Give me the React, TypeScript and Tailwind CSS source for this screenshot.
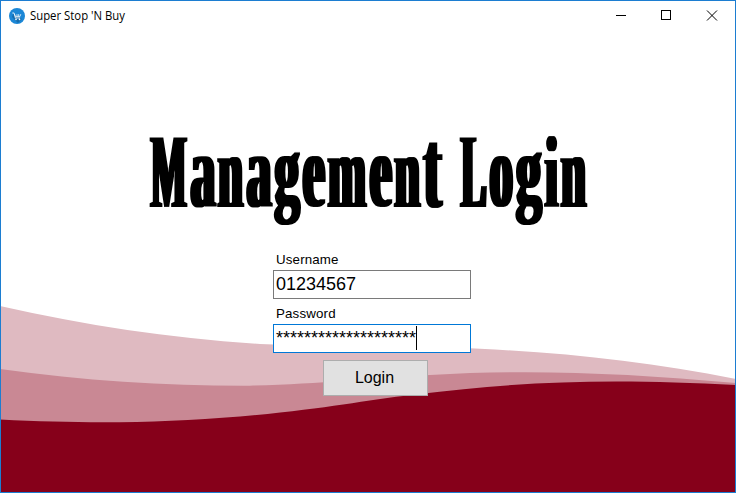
const letters: [string, number, number, number, number][] = [
  ["M", 151, 35.5, 106, 207], ["a", 190.5, 25, 106, 206], ["n", 218, 25, 106, 207], ["a", 246.5, 25, 106, 206], ["g", 274.5, 25, 99, 204],
  ["e", 302.5, 22.5, 106, 206], ["m", 328, 38, 106, 207], ["e", 369.5, 22.5, 106, 206], ["n", 394.5, 25.5, 106, 207], ["t", 423.5, 18, 114, 207],
  [" ", 444, 13, 106, 207], ["L", 461, 25.5, 106, 207], ["o", 489.5, 23.5, 106, 206], ["g", 516, 25.5, 99, 204], ["i", 545, 13, 101, 207], ["n", 561, 25, 106, 207],
];

function Waves() {
  return (
    <svg className="absolute inset-0 h-full w-full" viewBox="0 0 736 493">
      <path fill="#dfbac1" d="M0 306C88 326 170 338 260 344C335 347 410 345 480 348.8C570 353 650 362 736 379V493H0Z" />
      <path fill="#c98894" d="M0 369C85 381 170 386 250 385.7C320 384 370 378 430 375C530 369 625 373 736 383V493H0Z" />
      <path fill="#86001a" d="M0 419.5C90 424 160 423 240 416.5C325 409 360 401 415 394.5C530 380 620 379 736 385V493H0Z" />
    </svg>
  );
}

function Heading() {
  return (
    <svg className="mt-[54px] h-[160px] w-[734px] shrink-0" viewBox="1 85 734 160" role="heading">
      <defs>
        <filter id="heavy" x="-5%" y="-5%" width="110%" height="110%" colorInterpolationFilters="sRGB">
          <feMorphology operator="dilate" radius="2 0" />
        </filter>
      </defs>
      <text filter="url(#heavy)" fontWeight="700" className="font-['Liberation_Serif',serif]" xmlSpace="preserve">
        {letters.map(([c, x, w, size, y], i) => (
          <tspan key={i} x={x} y={y} fontSize={size} textLength={w} lengthAdjust="spacingAndGlyphs">{c}</tspan>
        ))}
      </text>
    </svg>
  );
}

export default function App() {
  return (
    <div className="relative flex h-[493px] w-[736px] flex-col overflow-hidden bg-white font-['Liberation_Sans',Arial,sans-serif] text-black">
      <Waves />
      <div className="relative flex h-full flex-col border border-[#1c7dd1]">
        <header className="flex h-[30px] shrink-0 items-center pl-2">
          <svg className="-mt-px" width="16" height="16" viewBox="0 0 16 16">
            <circle cx="8" cy="8" r="8" fill="#1b87d6" />
            <path d="M4 6l-1 3 6 6 4-4Z" fill="#146cae" />
            <path d="M3.3 5h1.8l1.3 5h4.7M5.5 6.2l1 2.4h4.3l1-2.4M8 6.2v2.2M9.7 6.2v2.2" fill="none" stroke="#fff" strokeWidth=".8" />
            <circle cx="7" cy="11.4" r=".8" fill="#fff" /><circle cx="10.5" cy="11.4" r=".8" fill="#fff" />
          </svg>
          <svg className="ml-[5px]" width="110" height="20">
            <text x="0" y="14" fontSize="12" textLength="95" lengthAdjust="spacingAndGlyphs" className="font-['Open_Sans',sans-serif]">Super Stop 'N Buy</text>
          </svg>
          <svg className="-mt-px ml-auto mr-[17px]" width="102" height="11" viewBox="0 0 102 11" fill="none" stroke="#000" shapeRendering="crispEdges">
            <path d="M0 5.5h10M45.5.5h9v9h-9z" />
            <path d="M91 .5l10 10M101 .5l-10 10" shapeRendering="auto" />
          </svg>
        </header>
        <Heading />
        <form className="ml-[272px] mt-[6px] flex w-[198px] flex-col" onSubmit={(e) => e.preventDefault()}>
          <label className="h-[19px] pl-[3px] text-[13.33px] leading-[17px] tracking-[0.15px]">Username</label>
          <div className="h-[29px] border border-[#7a7a7a] bg-white pl-[2px] text-[18px] leading-[27px]">01234567</div>
          <label className="mt-[6px] h-[19px] pl-[3px] text-[13.33px] leading-[17px] tracking-[0.15px]">Password</label>
          <div className="flex h-[29px] border border-[#0078d7] bg-white pl-[2px] text-[18px] leading-[27px]">
            <span>********************</span>
            <span className="mt-px h-[24px] w-px bg-black" />
          </div>
          <button className="ml-[50px] mt-[7px] h-[36px] w-[105px] border border-[#adadad] bg-[#e1e1e1] pr-[2px] text-[16px]">Login</button>
        </form>
      </div>
    </div>
  );
}
